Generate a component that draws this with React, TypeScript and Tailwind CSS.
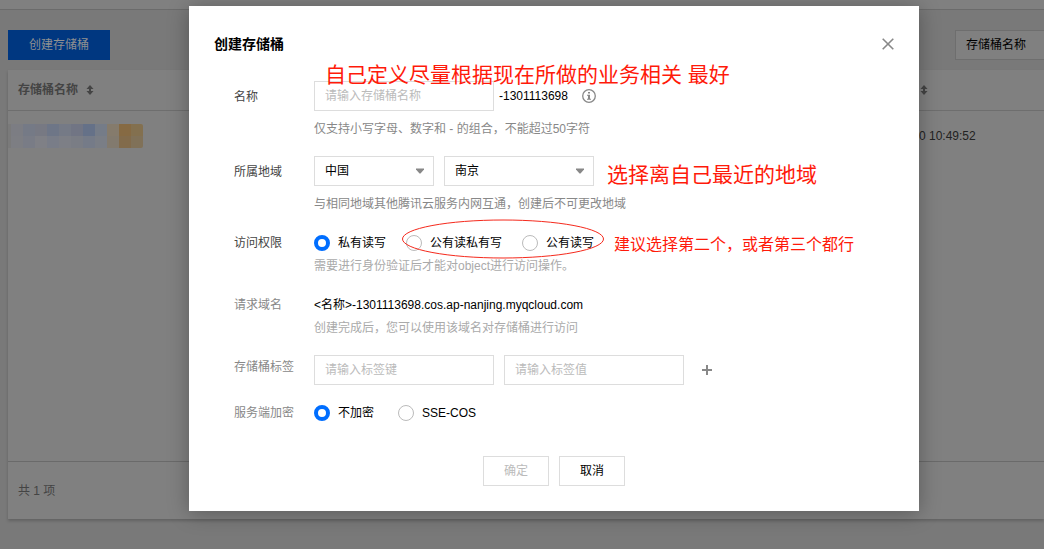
import type { ReactNode } from 'react';

const mosaic: string[][] = [
  ['bg-[#7a7a7a]', 'bg-[#7c7d83]', 'bg-[#757a86]', 'bg-[#777983]', 'bg-[#6e7687]', 'bg-[#757a86]', 'bg-[#717584]', 'bg-[#657188]', 'bg-[#757c88]', 'bg-[#857b6c]', 'bg-[#866a43]', 'bg-[#83704f]'],
  ['bg-[#7a7a7a]', 'bg-[#7d7e83]', 'bg-[#797c86]', 'bg-[#7f8086]', 'bg-[#797d88]', 'bg-[#7d7f86]', 'bg-[#7a7d85]', 'bg-[#757b88]', 'bg-[#7a7e86]', 'bg-[#827a6e]', 'bg-[#826b4b]', 'bg-[#807158]'],
];

function SortIcon() {
  return (
    <svg width="8" height="10" viewBox="0 0 8 10" fill="#444" aria-hidden="true">
      <path d="M4 0 7.500 4H5v2h2.500L4 10 .5 6H3V4H.5z" />
    </svg>
  );
}

function Row({ label, tone, children }: { label: string; tone: string; children: ReactNode }) {
  return (
    <div className="flex items-start">
      <div className={`w-20 shrink-0 ${tone}`}>{label}</div>
      <div className="min-w-0 flex-1">{children}</div>
    </div>
  );
}

function Radio({ name, label, checked = false }: { name: string; label: string; checked?: boolean }) {
  return (
    <label className="flex items-center gap-2">
      <input
        type="radio"
        name={name}
        defaultChecked={checked}
        className="size-4 shrink-0 appearance-none rounded-full border border-[#bbb] bg-white checked:border-[4px] checked:border-[#006eff]"
      />
      {label}
    </label>
  );
}

function Select({ label, value, width }: { label: string; value: string; width: string }) {
  return (
    <div className={`relative ${width}`}>
      <select aria-label={label} className="block h-[30px] w-full appearance-none border border-[#ddd] bg-white px-[10px]">
        <option>{value}</option>
      </select>
      <svg className="pointer-events-none absolute top-3 right-[9px]" width="10" height="6" viewBox="0 0 10 6" fill="#888" aria-hidden="true">
        <path d="M1 .5h8v1L5.500 5.500h-1L1 1.500z" />
      </svg>
    </div>
  );
}

const field = 'block h-[30px] w-[180px] border border-[#ddd] bg-white px-[10px] placeholder:text-[#bbb]';

export default function App() {
  return (
    <div className="relative min-h-screen overflow-hidden bg-[#797979] font-['Liberation_Sans','Noto_Sans_CJK_SC',sans-serif] text-[12px] leading-[20px] text-black">
      <div className="h-[10px] border-b border-[#6b6b6b] bg-[#808080]" />
      <main className="pt-5 pl-2">
        <div className="flex items-start justify-between">
          <button className="h-[30px] w-[102px] bg-[#003780] text-[#909090]">创建存储桶</button>
          <button className="h-[30px] w-[89px] border border-r-0 border-[#6e6e6e] bg-[#808080] pl-[10px] text-left">存储桶名称</button>
        </div>
        <section className="mt-[10px] bg-[#808080] shadow-[0_2px_3px_rgba(0,0,0,0.2)]">
          <div className="min-h-[391px]">
            <table className="w-full border-separate border-spacing-0 text-left">
              <thead>
                <tr className="h-[41px]">
                  <th className="border-b border-[#6e6e6e] pl-[10px] font-bold text-[#444]">
                    <span className="flex items-center gap-2">存储桶名称 <SortIcon /></span>
                  </th>
                  <th className="w-[125px] border-b border-[#6e6e6e] pl-px"><SortIcon /></th>
                </tr>
              </thead>
              <tbody>
                <tr className="h-[50px]">
                  <td>
                    <div className="flex w-[135px] flex-col overflow-hidden rounded-r-[2px]">
                      {mosaic.map((cells, r) => (
                        <div key={r} className="flex h-3">
                          {cells.map((c, i) => (
                            <span key={i} className={`h-3 ${i === 0 ? 'w-[3px]' : 'w-3'} ${c}`} />
                          ))}
                        </div>
                      ))}
                    </div>
                  </td>
                  <td className="text-[#222]">0 10:49:52</td>
                </tr>
              </tbody>
            </table>
          </div>
          <div className="flex h-[58px] items-center border-t border-[#6a6a6a] pl-[10px] text-[#444]">共 1 项</div>
        </section>
      </main>

      <div className="absolute inset-0 flex items-start justify-center pt-[6px] pl-16">
        <div role="dialog" aria-labelledby="dialog-title" className="relative w-[730px] bg-white pb-[25px] shadow-[0_2px_20px_rgba(0,0,0,0.3)]">
          <header className="flex items-center justify-between pt-7 pr-[25px] pl-[25px]">
            <h1 id="dialog-title" className="text-[14px] leading-[20px] font-bold">创建存储桶</h1>
            <button aria-label="关闭">
              <svg width="12" height="12" viewBox="0 0 12 12" fill="none" stroke="#888" strokeWidth="1.6">
                <path d="M.7.7l10.600 10.600M11.300.7L.7 11.300" />
              </svg>
            </button>
          </header>

          <form className="mt-[27px] flex flex-col gap-[18px] pl-[45px]">
            <Row label="名称" tone="pt-[6px] text-[#444]">
              <div className="flex items-center">
                <input aria-label="名称" placeholder="请输入存储桶名称" className={field} />
                <span className="ml-[5px]">-1301113698</span>
                <svg className="ml-[14px]" width="14" height="14" viewBox="0 0 14 14" fill="none" aria-hidden="true">
                  <circle cx="7" cy="7" r="6.300" stroke="#888" strokeWidth="1.300" />
                  <path d="M6 3h2v1.500H6zM5 5.800h3v4h1v1H5v-1h1V6.800H5z" fill="#888" />
                </svg>
              </div>
              <p className="mt-2 -mb-px text-[#888]">仅支持小写字母、数字和 - 的组合，不能超过50字符</p>
            </Row>

            <Row label="所属地域" tone="pt-[6px] text-[#444]">
              <div className="flex gap-[10px]">
                <Select label="国家" value="中国" width="w-[120px]" />
                <Select label="城市" value="南京" width="w-[150px]" />
              </div>
              <p className="mt-2 -mb-px text-[#888]">与相同地域其他腾讯云服务内网互通，创建后不可更改地域</p>
            </Row>

            <Row label="访问权限" tone="leading-6 text-[#444]">
              <div className="flex gap-5 leading-6">
                <Radio name="access" label="私有读写" checked />
                <Radio name="access" label="公有读私有写" />
                <Radio name="access" label="公有读写" />
              </div>
              <p className="mt-px text-[#aaa]">需要进行身份验证后才能对object进行访问操作。</p>
            </Row>

            <Row label="请求域名" tone="leading-[22px] text-[#888]">
              <p className="leading-[22px]">&lt;名称&gt;-1301113698.cos.ap-nanjing.myqcloud.com</p>
              <p className="mt-[2px] -mb-px text-[#aaa]">创建完成后，您可以使用该域名对存储桶进行访问</p>
            </Row>

            <Row label="存储桶标签" tone="pt-[2px] text-[#888]">
              <div className="flex items-center gap-[10px]">
                <input aria-label="标签键" placeholder="请输入标签键" className={field} />
                <input aria-label="标签值" placeholder="请输入标签值" className={field} />
                <button type="button" aria-label="添加" className="ml-2">
                  <svg width="10" height="10" viewBox="0 0 10 10" fill="#888">
                    <path d="M4 0h2v4h4v2H6v4H4V6H0V4h4z" />
                  </svg>
                </button>
              </div>
            </Row>

            <Row label="服务端加密" tone="text-[#888]">
              <div className="flex gap-6">
                <Radio name="encryption" label="不加密" checked />
                <Radio name="encryption" label="SSE-COS" />
              </div>
            </Row>
          </form>

          <footer className="mt-[33px] flex justify-center gap-[10px]">
            <button disabled className="h-[30px] w-[66px] border border-[#ddd] text-[#bbb]">确定</button>
            <button className="h-[30px] w-[66px] border border-[#ddd]">取消</button>
          </footer>

          <p className="absolute top-[54px] left-[136px] text-[21px] leading-[30px] whitespace-nowrap text-[#ff1a0a]">自己定义尽量根据现在所做的业务相关 最好</p>
          <p className="absolute top-[154px] left-[418px] text-[21px] leading-[30px] whitespace-nowrap text-[#ff1a0a]">选择离自己最近的地域</p>
          <p className="absolute top-[229px] left-[425px] text-[16px] leading-[20px] whitespace-nowrap text-[#ff1a0a]">建议选择第二个，或者第三个都行</p>
          <svg className="pointer-events-none absolute top-[213px] left-[212px]" width="204" height="40" viewBox="0 0 204 40" fill="none" aria-hidden="true">
            <ellipse cx="102" cy="20" rx="100.500" ry="19" stroke="#f5291c" />
          </svg>
        </div>
      </div>
    </div>
  );
}
